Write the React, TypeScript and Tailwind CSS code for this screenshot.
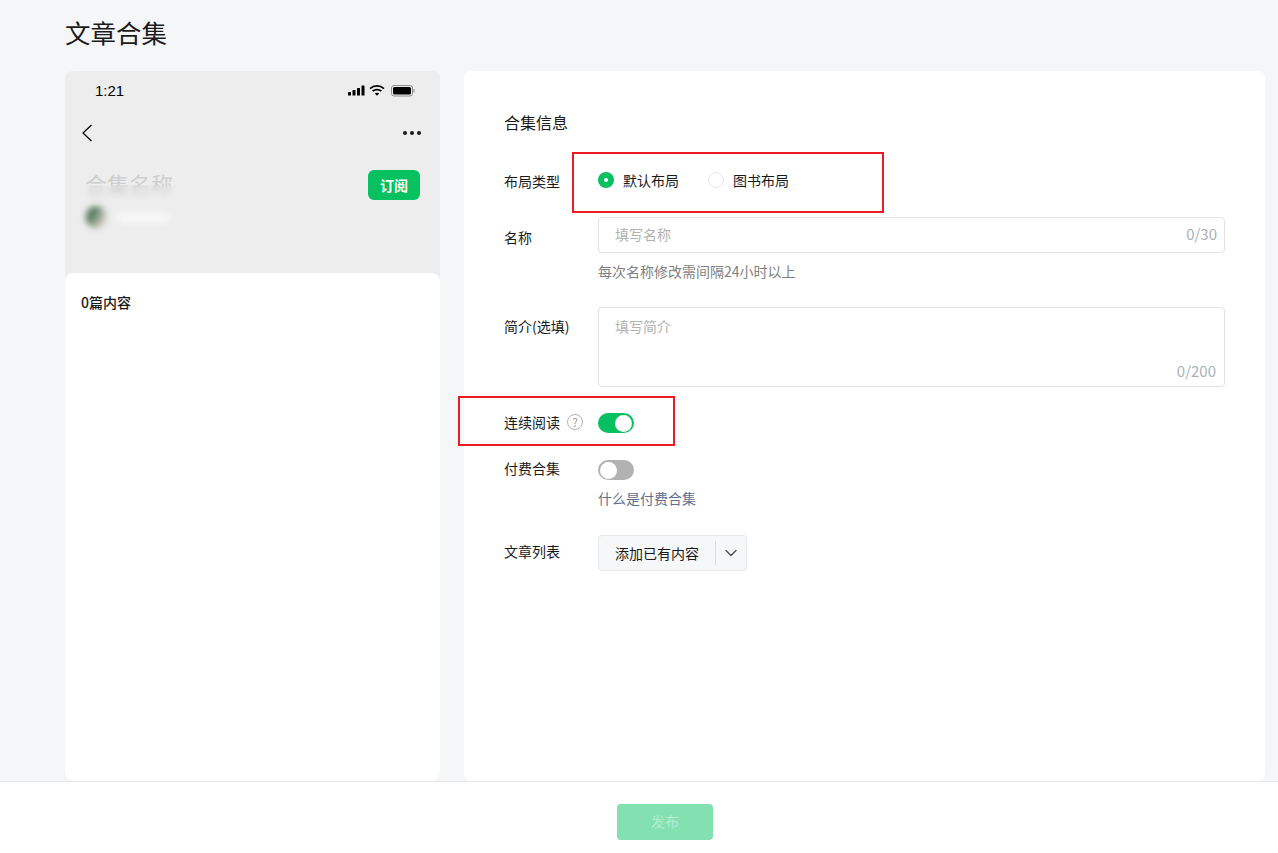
import { ChevronDown } from 'lucide-react';

const font = { fontFamily: '"Segoe UI", "Noto Sans CJK SC", sans-serif' };
const labelCls = 'w-[94px] shrink-0 text-sm text-[#1a1a1a]';
const redBoxCls = 'absolute border-2 border-[#ed1c24] pointer-events-none';

function Toggle({ on }: { on: boolean }) {
  return (
    <div className={`w-9 h-5 rounded-full flex items-center px-[2px] ${on ? 'bg-[#07c160] justify-end' : 'bg-[#b2b2b2] justify-start'}`}>
      <div className="w-[17px] h-[17px] rounded-full bg-white" />
    </div>
  );
}

function StatusIcons() {
  return (
    <svg width="67" height="12" viewBox="0 0 67 12" fill="none">
      <rect x="0" y="7" width="3" height="3.5" rx="0.5" fill="#000" />
      <rect x="4.5" y="5" width="3" height="5.5" rx="0.5" fill="#000" />
      <rect x="9" y="3" width="3" height="7.5" rx="0.5" fill="#000" />
      <rect x="13.5" y="0.5" width="3" height="10" rx="0.5" fill="#000" />
      <path d="M22 3.6 C26 0 32 0 36 3.6" stroke="#000" strokeWidth="1.8" />
      <path d="M24.6 6.2 C27 4 31 4 33.4 6.2" stroke="#000" strokeWidth="1.8" />
      <path d="M29 10.8 L26.8 8.5 C28 7.4 30 7.4 31.2 8.5 Z" fill="#000" />
      <rect x="43.5" y="0.5" width="21" height="10.5" rx="2.5" stroke="#8c8c8c" />
      <rect x="45" y="2" width="18" height="7.5" rx="1.5" fill="#000" />
      <rect x="65.5" y="4" width="1" height="3.5" fill="#8c8c8c" />
    </svg>
  );
}

function PhonePreview() {
  return (
    <div className="w-[375px] h-full rounded-lg bg-[#ededed] flex flex-col overflow-hidden">
      <div className="h-[40px] pl-[30px] pr-[25px] pt-[12px] flex justify-between items-start">
        <span className="text-[15px] leading-4 text-black" style={{ fontFamily: '"Liberation Sans", sans-serif' }}>1:21</span>
        <div className="pt-[2px]"><StatusIcons /></div>
      </div>
      <div className="h-[44px] pl-[16px] pr-[19px] flex items-center justify-between">
        <svg width="12" height="18" viewBox="0 0 12 18" fill="none">
          <path d="M10.5 1 L2 9 L10.5 17" stroke="#000" strokeWidth="1.2" />
        </svg>
        <div className="flex gap-[3px]">
          <div className="w-1 h-1 rounded-full bg-[#1a1a1a]" />
          <div className="w-1 h-1 rounded-full bg-[#1a1a1a]" />
          <div className="w-1 h-1 rounded-full bg-[#1a1a1a]" />
        </div>
      </div>
      <div className="relative h-[118px] pl-[20px] pr-[20px] pt-[13px] flex justify-between items-start">
        <div>
          <div className="text-[22px] leading-[30px] text-[#cfcfcf]">合集名称</div>
          <div className="mt-[8px] ml-[1px] flex items-center gap-[10px]">
            <div className="w-[20px] h-[22px] rounded-full blur-[3px]" style={{ background: 'linear-gradient(120deg,#4f7558 30%,#d9d2c8 85%)' }} />
            <div className="w-[54px] h-[11px] bg-[#f6f6f6] blur-[3px]" />
          </div>
        </div>
        <div className="absolute left-[15px] top-[30px] w-[104px] h-[20px] backdrop-blur-[3px]" />
        <div className="absolute right-[20px] top-[15px]">
          <button className="w-[52px] h-[30px] rounded-md bg-[#07c160] text-white text-sm font-bold flex items-center justify-center">订阅</button>
        </div>
      </div>
      <div className="flex-1 bg-white rounded-lg px-4 pt-[20px]">
        <div className="text-sm leading-[18px] font-medium text-[#1a1a1a]">0篇内容</div>
      </div>
    </div>
  );
}

function InfoForm() {
  return (
    <div className="relative flex-1 h-full bg-white rounded-lg pl-10 pr-10 pt-[40px]">
      <div className="text-base leading-[22px] text-[#1a1a1a]">合集信息</div>

      <div className="mt-[37px] flex items-center h-[22px]">
        <div className={labelCls}>布局类型</div>
        <div className="flex items-center gap-[9px] text-sm text-[#1a1a1a] pb-[2px]">
          <div className="w-4 h-4 rounded-full bg-[#07c160] flex items-center justify-center">
            <div className="w-1 h-1 rounded-full bg-white" />
          </div>
          <span>默认布局</span>
          <div className="ml-[20px] w-4 h-4 rounded-full border border-[#e5e5e5]" />
          <span>图书布局</span>
        </div>
      </div>

      <div className="mt-[25px] flex items-start">
        <div className={`${labelCls} pt-[10px]`}>名称</div>
        <div className="flex-1">
          <div className="h-9 rounded border border-[#e2e2e2] pl-4 pr-[7px] pb-[2px] flex items-center justify-between text-sm">
            <span className="text-[#b2b2b2]">填写名称</span>
            <span className="text-[15px] text-[#aab0b8]">0/30</span>
          </div>
          <div className="mt-[8px] text-sm leading-5 text-[#7f7f7f]">每次名称修改需间隔24小时以上</div>
        </div>
      </div>

      <div className="mt-[26px] flex items-start">
        <div className={`${labelCls} pt-[9px]`}>简介(选填)</div>
        <div className="flex-1 h-20 rounded border border-[#e2e2e2] pl-4 pr-[8px] pt-[8px] pb-[5px] flex flex-col justify-between text-sm">
          <span className="text-[#b2b2b2]">填写简介</span>
          <span className="self-end text-[15px] text-[#aab0b8]">0/200</span>
        </div>
      </div>

      <div className="mt-[26px] flex items-center h-5">
        <div className={`${labelCls} flex items-center gap-[7px] -mt-[3px]`}>
          <span>连续阅读</span>
          <span className="w-4 h-4 rounded-full border border-[#b2b2b2] text-xs leading-none text-[#a0a0a0] flex items-center justify-center">?</span>
        </div>
        <Toggle on />
      </div>

      <div className="mt-[27px] flex items-start">
        <div className={`${labelCls} leading-5 -mt-[2px]`}>付费合集</div>
        <div>
          <Toggle on={false} />
          <div className="mt-[8px] text-sm leading-5 text-[#5f6f8f]">什么是付费合集</div>
        </div>
      </div>

      <div className="mt-[27px] flex items-start">
        <div className={`${labelCls} pt-[6px]`}>文章列表</div>
        <div className="h-9 w-[149px] rounded border border-[#e8e8e8] bg-[#f6f7f9] flex items-center text-sm text-[#1a1a1a]">
          <span className="pl-4 pr-4 border-r border-[#dcdcdc] leading-[24px]">添加已有内容</span>
          <ChevronDown className="ml-[5px] w-5 h-5 text-[#4a4a4a]" strokeWidth={1.5} />
        </div>
      </div>

      <div className={`${redBoxCls} left-[108px] top-[81px] w-[312px] h-[61px]`} />
      <div className={`${redBoxCls} left-[-6px] top-[325px] w-[217px] h-[50px]`} />
    </div>
  );
}

export default function App() {
  return (
    <div className="h-[853px] flex flex-col bg-[#f5f6f8]" style={font}>
      <div className="h-[71px] shrink-0 pl-[65px] pt-[14px]">
        <h1 className="text-[25.5px] leading-9 font-normal text-[#1a1a1a]">文章合集</h1>
      </div>
      <div className="h-[710px] shrink-0 pl-[65px] pr-[13px] flex gap-6">
        <PhonePreview />
        <InfoForm />
      </div>
      <div className="flex-1 bg-white border-t border-[#e8e8e8] flex justify-center pt-[22px] pl-[52px]">
        <button className="w-[96px] h-9 pb-[2px] rounded bg-[#83e0b0] text-sm text-[#b5ecd0]">发布</button>
      </div>
    </div>
  );
}
